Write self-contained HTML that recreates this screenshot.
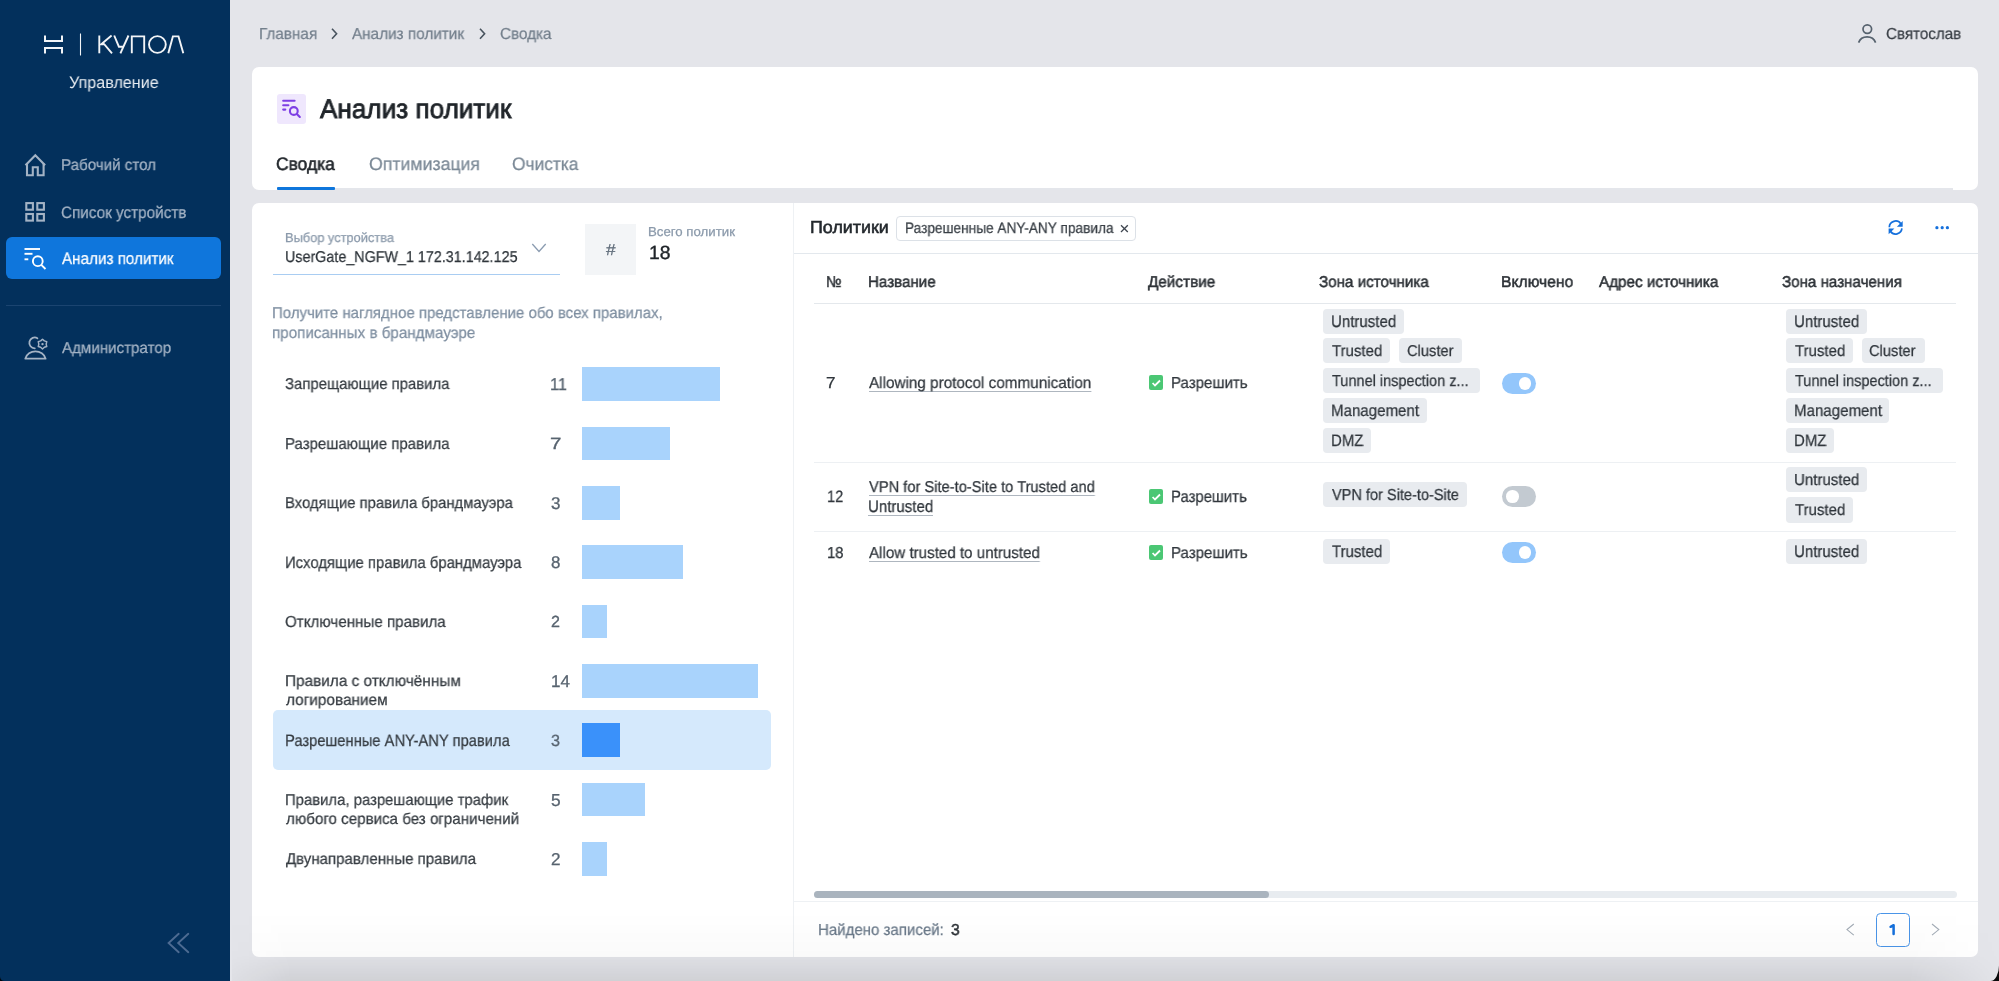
<!DOCTYPE html>
<html><head><meta charset="utf-8"><title>Анализ политик</title>
<style>
html,body{margin:0;padding:0;}
body{width:1999px;height:981px;overflow:hidden;position:relative;background:#E4E5EA;font-family:'Liberation Sans', sans-serif;}
.t{position:absolute;white-space:nowrap;will-change:transform;text-rendering:geometricPrecision;}
.r{position:absolute;}
</style></head><body>
<div class="r" style="left:0px;top:0px;width:230px;height:981px;background:#03305C;"></div>
<svg class="r" style="left:0;top:0" width="230" height="100" viewBox="0 0 230 100">
<g fill="none" stroke="#F2F4F7" stroke-width="2">
<path d="M45 35.5 V41 H62 V35.5"/><path d="M45 53.5 V48 H62 V53.5"/>
</g>
<path d="M80.5 33.5 V55.5" stroke="#F2F4F7" stroke-width="1.1"/>
<g fill="none" stroke="#F2F4F7" stroke-width="1.9">
<path d="M99.3 35.5 V53.3"/><path d="M111.6 35.6 L101.2 44.2 H104.2 L112 53.3"/>
<path d="M114.2 35.5 L118.9 46.7 H123.2"/><path d="M128.5 35.5 L120.4 53.3"/>
<path d="M131.8 53.3 V36.4 H144.2 V53.3"/>
<circle cx="157.4" cy="44.5" r="8.4"/>
<path d="M168.3 53.3 L172.9 36.4 H178.5 L183.3 53.3"/>
</g></svg>
<div class="t" style="left:69.30px;top:75px;font-size:16.6px;line-height:16.6px;font-weight:400;color:#E9EDF2;transform:scaleX(0.9723);transform-origin:0 0;-webkit-text-stroke:0px">Управление</div>
<div class="t" style="left:60.50px;top:158px;font-size:15.7px;line-height:15.7px;font-weight:400;color:#A4B3C5;transform:scaleX(0.9646);transform-origin:0 0;-webkit-text-stroke:0.25px #A4B3C5;">Рабочий стол</div>
<div class="t" style="left:60.50px;top:205px;font-size:16.5px;line-height:16.5px;font-weight:400;color:#A4B3C5;transform:scaleX(0.9254);transform-origin:0 0;-webkit-text-stroke:0.25px #A4B3C5;">Список устройств</div>
<div class="r" style="left:6px;top:237px;width:215px;height:42px;background:#0F76DC;border-radius:6px"></div>
<div class="t" style="left:61.50px;top:251px;font-size:16.6px;line-height:16.6px;font-weight:400;color:#FFFFFF;transform:scaleX(0.9174);transform-origin:0 0;-webkit-text-stroke:0.25px #FFFFFF;">Анализ политик</div>
<div class="r" style="left:6px;top:305px;width:215px;height:1px;background:#1B4470;"></div>
<div class="t" style="left:61.50px;top:341px;font-size:15.7px;line-height:15.7px;font-weight:400;color:#A4B3C5;transform:scaleX(0.9646);transform-origin:0 0;-webkit-text-stroke:0.25px #A4B3C5;">Администратор</div>
<svg class="r" style="left:0;top:140px" width="60" height="240" viewBox="0 140 60 240">
<g fill="none" stroke="#A4B3C5" stroke-width="2.1" stroke-linejoin="miter">
<path d="M25.5 165.3 L35.3 155.2 L45.1 165.3"/>
<path d="M27 163.3 V175.3 H32.8 V167.2 H37.8 V175.3 H43.6 V163.3"/>
<rect x="26.3" y="203.1" width="6.6" height="6.6"/><rect x="37.3" y="203.1" width="6.6" height="6.6"/>
<rect x="26.3" y="214" width="6.6" height="6.6"/><rect x="37.3" y="214" width="6.6" height="6.6"/>
</g>
<g fill="none" stroke="#FFFFFF" stroke-width="1.9">
<path d="M24.5 249 H40"/><path d="M24.5 253.8 H32.5"/><path d="M24.5 259.3 H28.3"/>
<circle cx="37.8" cy="261.2" r="4.9"/><path d="M41.3 264.8 L45.5 269"/>
</g>
<g fill="none" stroke="#A4B3C5" stroke-width="1.8" stroke-linejoin="round" stroke-linecap="round">
<path d="M37.4 338.2 A5.4 5.4 0 1 0 34.8 348.3"/>
<path d="M25.3 358.7 H45.6 C44.5 354 40 351.3 35.45 351.3 C30.9 351.3 26.4 354 25.3 358.7 Z"/>
<path d="M42.50 339.20 L44.35 340.90 L46.74 341.65 L46.20 344.10 L46.74 346.55 L44.35 347.30 L42.50 349.00 L40.65 347.30 L38.26 346.55 L38.80 344.10 L38.26 341.65 L40.65 340.90 Z" stroke-width="1.5"/>
</g>
<circle cx="42.5" cy="344.1" r="1.2" fill="#A4B3C5"/>
</svg>
<svg class="r" style="left:160px;top:925px" width="40" height="40" viewBox="160 925 40 40">
<g fill="none" stroke="#4D6B92" stroke-width="1.9" stroke-linecap="round"><path d="M178.7 933.8 L168.6 943 L178.7 952.2"/><path d="M188.3 933.8 L178.2 943 L188.3 952.2"/></g></svg>
<div class="t" style="left:259.20px;top:27px;font-size:15.9px;line-height:15.9px;font-weight:400;color:#737F8C;transform:scaleX(0.9612);transform-origin:0 0;-webkit-text-stroke:0.25px #737F8C;">Главная</div>
<div class="t" style="left:352.30px;top:27px;font-size:15.9px;line-height:15.9px;font-weight:400;color:#737F8C;transform:scaleX(0.9621);transform-origin:0 0;-webkit-text-stroke:0.25px #737F8C;">Анализ политик</div>
<div class="t" style="left:500.20px;top:27px;font-size:15.9px;line-height:15.9px;font-weight:400;color:#737F8C;transform:scaleX(0.9605);transform-origin:0 0;-webkit-text-stroke:0.25px #737F8C;">Сводка</div>
<svg class="r" style="left:320px;top:20px" width="180" height="30" viewBox="320 20 180 30">
<g fill="none" stroke="#48535E" stroke-width="1.6"><path d="M332 28.8 L336.6 33.8 L332 38.8"/><path d="M480 28.8 L484.6 33.8 L480 38.8"/></g></svg>
<svg class="r" style="left:1850px;top:18px" width="30" height="30" viewBox="1850 18 30 30">
<g fill="none" stroke="#56626E" stroke-width="1.7"><circle cx="1867.3" cy="29.1" r="4.3"/><path d="M1858.6 42.6 A9 8.5 0 0 1 1875.6 42.6"/></g></svg>
<div class="t" style="left:1885.80px;top:27px;font-size:15.9px;line-height:15.9px;font-weight:400;color:#383E45;transform:scaleX(0.9546);transform-origin:0 0;-webkit-text-stroke:0.25px #383E45;">Святослав</div>
<div class="r" style="left:252px;top:67px;width:1726px;height:123px;background:#FFFFFF;border-radius:7px"></div>
<div class="r" style="left:277px;top:94px;width:29.3px;height:29.5px;background:#EFE7FD;border-radius:3px"></div>
<svg class="r" style="left:270px;top:88px" width="50" height="42" viewBox="270 88 50 42">
<g fill="none" stroke="#7E3FE4" stroke-width="2.1" stroke-linecap="round">
<path d="M283.2 100.8 H294.6"/><path d="M283.2 105.2 H288.4"/><path d="M283.2 109.6 H285.3"/>
<circle cx="293.8" cy="111" r="3.9"/><path d="M296.8 114 L299.8 117"/></g></svg>
<div class="t" style="left:319.70px;top:95px;font-size:27.1px;line-height:27.1px;font-weight:400;color:#1F2429;transform:scaleX(0.9638);transform-origin:0 0;-webkit-text-stroke:0.85px #1F2429">Анализ политик</div>
<div class="t" style="left:276.30px;top:155px;font-size:18.0px;line-height:18.0px;font-weight:400;color:#22272C;transform:scaleX(0.9684);transform-origin:0 0;-webkit-text-stroke:0.55px #22272C">Сводка</div>
<div class="t" style="left:368.90px;top:155px;font-size:18.0px;line-height:18.0px;font-weight:400;color:#7B8996;transform:scaleX(0.9838);transform-origin:0 0;-webkit-text-stroke:0.25px #7B8996;">Оптимизация</div>
<div class="t" style="left:511.80px;top:155px;font-size:18.0px;line-height:18.0px;font-weight:400;color:#7B8996;transform:scaleX(0.9618);transform-origin:0 0;-webkit-text-stroke:0.25px #7B8996;">Очистка</div>
<div class="r" style="left:277px;top:188px;width:1676px;height:2px;background:#E4E6EB;"></div>
<div class="r" style="left:277px;top:187px;width:58px;height:3px;background:#0F76DC;border-radius:1px"></div>
<div class="r" style="left:252px;top:202.5px;width:1726px;height:754.5px;background:#FFFFFF;border-radius:7px"></div>
<div class="t" style="left:284.75px;top:231px;font-size:13.0px;line-height:13.0px;font-weight:400;color:#8A99AA;transform:scaleX(0.9864);transform-origin:0 0;-webkit-text-stroke:0.25px #8A99AA;">Выбор устройства</div>
<div class="t" style="left:284.75px;top:250px;font-size:15.7px;line-height:15.7px;font-weight:400;color:#2E343A;transform:scaleX(0.9130);transform-origin:0 0;-webkit-text-stroke:0.25px #2E343A;">UserGate_NGFW_1 172.31.142.125</div>
<div class="r" style="left:272.5px;top:274px;width:287.5px;height:1.2px;background:#A9CDF2;"></div>
<svg class="r" style="left:525px;top:238px" width="30" height="20" viewBox="525 238 30 20">
<path d="M532.3 244 L539 251.5 L545.7 244" fill="none" stroke="#8A9BB0" stroke-width="1.3"/></svg>
<div class="r" style="left:585px;top:223.7px;width:51px;height:51px;background:#F3F5F7;"></div>
<div class="t" style="left:605.75px;top:243px;font-size:15.9px;line-height:15.9px;font-weight:400;color:#5E6B79;transform:scaleX(1.0857);transform-origin:0 0;-webkit-text-stroke:0.25px #5E6B79;">#</div>
<div class="t" style="left:647.75px;top:225px;font-size:13.0px;line-height:13.0px;font-weight:400;color:#8A99AA;transform:scaleX(1.0179);transform-origin:0 0;-webkit-text-stroke:0.25px #8A99AA;">Всего политик</div>
<div class="t" style="left:648.50px;top:244px;font-size:19.1px;line-height:19.1px;font-weight:400;color:#1F2429;transform:scaleX(1.0136);transform-origin:0 0;-webkit-text-stroke:0.4px #1F2429">18</div>
<div class="t" style="left:271.80px;top:306px;font-size:15.7px;line-height:15.7px;font-weight:400;color:#7F8FA1;transform:scaleX(0.9555);transform-origin:0 0;-webkit-text-stroke:0.25px #7F8FA1;">Получите наглядное представление обо всех правилах,</div>
<div class="t" style="left:271.80px;top:326px;font-size:15.9px;line-height:15.9px;font-weight:400;color:#7F8FA1;transform:scaleX(0.9559);transform-origin:0 0;-webkit-text-stroke:0.25px #7F8FA1;">прописанных в брандмауэре</div>
<div class="t" style="left:284.80px;top:377px;font-size:15.7px;line-height:15.7px;font-weight:400;color:#363C42;transform:scaleX(0.9494);transform-origin:0 0;-webkit-text-stroke:0.25px #363C42;">Запрещающие правила</div>
<div class="t" style="left:549.80px;top:376px;font-size:17.1px;line-height:17.1px;font-weight:400;color:#57636F;transform:scaleX(0.9564);transform-origin:0 0;-webkit-text-stroke:0.3px #57636F">11</div>
<div class="r" style="left:582px;top:367.2px;width:138.27px;height:33.6px;background:#A9D3FC;"></div>
<div class="t" style="left:284.80px;top:437px;font-size:15.9px;line-height:15.9px;font-weight:400;color:#363C42;transform:scaleX(0.9451);transform-origin:0 0;-webkit-text-stroke:0.25px #363C42;">Разрешающие правила</div>
<div class="t" style="left:549.80px;top:436px;font-size:16.2px;line-height:16.2px;font-weight:400;color:#57636F;transform:scaleX(1.2768);transform-origin:0 0;-webkit-text-stroke:0.3px #57636F">7</div>
<div class="r" style="left:582px;top:426.575px;width:87.99000000000001px;height:33.6px;background:#A9D3FC;"></div>
<div class="t" style="left:284.80px;top:496px;font-size:15.7px;line-height:15.7px;font-weight:400;color:#363C42;transform:scaleX(0.9467);transform-origin:0 0;-webkit-text-stroke:0.25px #363C42;">Входящие правила брандмауэра</div>
<div class="t" style="left:550.80px;top:495px;font-size:17.0px;line-height:17.0px;font-weight:400;color:#57636F;-webkit-text-stroke:0.3px #57636F">3</div>
<div class="r" style="left:582px;top:485.95px;width:37.71px;height:33.6px;background:#A9D3FC;"></div>
<div class="t" style="left:284.80px;top:555px;font-size:16.5px;line-height:16.5px;font-weight:400;color:#363C42;transform:scaleX(0.9008);transform-origin:0 0;-webkit-text-stroke:0.25px #363C42;">Исходящие правила брандмауэра</div>
<div class="t" style="left:550.80px;top:555px;font-size:16.9px;line-height:16.9px;font-weight:400;color:#57636F;-webkit-text-stroke:0.3px #57636F">8</div>
<div class="r" style="left:582px;top:545.325px;width:100.56px;height:33.6px;background:#A9D3FC;"></div>
<div class="t" style="left:284.80px;top:615px;font-size:15.9px;line-height:15.9px;font-weight:400;color:#363C42;transform:scaleX(0.9530);transform-origin:0 0;-webkit-text-stroke:0.25px #363C42;">Отключенные правила</div>
<div class="t" style="left:550.80px;top:614px;font-size:16.1px;line-height:16.1px;font-weight:400;color:#57636F;-webkit-text-stroke:0.3px #57636F">2</div>
<div class="r" style="left:582px;top:604.7px;width:25.14px;height:33.6px;background:#A9D3FC;"></div>
<div class="t" style="left:284.80px;top:674px;font-size:15.7px;line-height:15.7px;font-weight:400;color:#363C42;transform:scaleX(0.9787);transform-origin:0 0;-webkit-text-stroke:0.25px #363C42;">Правила с отключённым</div>
<div class="t" style="left:285.80px;top:693px;font-size:15.7px;line-height:15.7px;font-weight:400;color:#363C42;transform:scaleX(0.9796);transform-origin:0 0;-webkit-text-stroke:0.25px #363C42;">логированием</div>
<div class="t" style="left:550.80px;top:673px;font-size:17.0px;line-height:17.0px;font-weight:400;color:#57636F;-webkit-text-stroke:0.3px #57636F">14</div>
<div class="r" style="left:582px;top:664.075px;width:175.98000000000002px;height:33.6px;background:#A9D3FC;"></div>
<div class="r" style="left:272.7px;top:710.45px;width:498.3px;height:59.3px;background:#D5E9FC;border-radius:5px"></div>
<div class="t" style="left:284.80px;top:733px;font-size:16.5px;line-height:16.5px;font-weight:400;color:#363C42;transform:scaleX(0.8924);transform-origin:0 0;-webkit-text-stroke:0.25px #363C42;">Разрешенные ANY-ANY правила</div>
<div class="t" style="left:550.80px;top:733px;font-size:16.2px;line-height:16.2px;font-weight:400;color:#57636F;-webkit-text-stroke:0.3px #57636F">3</div>
<div class="r" style="left:582px;top:723.45px;width:37.71px;height:33.6px;background:#3A91FA;"></div>
<div class="t" style="left:284.80px;top:793px;font-size:15.7px;line-height:15.7px;font-weight:400;color:#363C42;transform:scaleX(0.9479);transform-origin:0 0;-webkit-text-stroke:0.25px #363C42;">Правила, разрешающие трафик</div>
<div class="t" style="left:285.80px;top:812px;font-size:15.7px;line-height:15.7px;font-weight:400;color:#363C42;transform:scaleX(0.9651);transform-origin:0 0;-webkit-text-stroke:0.25px #363C42;">любого сервиса без ограничений</div>
<div class="t" style="left:550.80px;top:792px;font-size:17.3px;line-height:17.3px;font-weight:400;color:#57636F;-webkit-text-stroke:0.3px #57636F">5</div>
<div class="r" style="left:582px;top:782.825px;width:62.85px;height:33.6px;background:#A9D3FC;"></div>
<div class="t" style="left:285.80px;top:852px;font-size:15.7px;line-height:15.7px;font-weight:400;color:#363C42;transform:scaleX(0.9586);transform-origin:0 0;-webkit-text-stroke:0.25px #363C42;">Двунаправленные правила</div>
<div class="t" style="left:550.80px;top:851px;font-size:17.1px;line-height:17.1px;font-weight:400;color:#57636F;-webkit-text-stroke:0.3px #57636F">2</div>
<div class="r" style="left:582px;top:842.2px;width:25.14px;height:33.6px;background:#A9D3FC;"></div>
<div class="r" style="left:792.5px;top:202.5px;width:1px;height:754.5px;background:#EEF1F4;"></div>
<div class="t" style="left:809.50px;top:219px;font-size:17.3px;line-height:17.3px;font-weight:400;color:#23282D;transform:scaleX(1.0338);transform-origin:0 0;-webkit-text-stroke:0.55px #23282D">Политики</div>
<div class="r" style="left:896.3px;top:215.5px;width:240.2px;height:25px;background:#FFFFFF;border:1px solid #DCE1E7;border-radius:4px;box-sizing:border-box"></div>
<div class="t" style="left:905.00px;top:221px;font-size:15.1px;line-height:15.1px;font-weight:400;color:#3A4047;transform:scaleX(0.9052);transform-origin:0 0;-webkit-text-stroke:0.25px #3A4047;">Разрешенные ANY-ANY правила</div>
<svg class="r" style="left:1115px;top:220px" width="20" height="20" viewBox="1115 220 20 20">
<g stroke="#3F4650" stroke-width="1.3"><path d="M1121 225.2 L1127.8 232"/><path d="M1127.8 225.2 L1121 232"/></g></svg>
<svg class="r" style="left:1880px;top:212px" width="80" height="30" viewBox="1880 212 80 30">
<g fill="none" stroke="#1570DC" stroke-width="1.7">
<path d="M1889.3 227.2 A6.3 6.3 0 0 1 1900.8 223.8"/><path d="M1901.9 228.4 A6.3 6.3 0 0 1 1890.4 231.2"/></g>
<path d="M1902.7 221 V226.8 H1896.9 Z" fill="#1570DC"/><path d="M1888.6 234.3 V228.5 H1894.4 Z" fill="#1570DC"/>
<g fill="#1570DC"><circle cx="1936.9" cy="227.7" r="1.6"/><circle cx="1942.2" cy="227.7" r="1.6"/><circle cx="1947.4" cy="227.7" r="1.6"/></g>
</svg>
<div class="r" style="left:793.5px;top:253px;width:1184.5px;height:1px;background:#E3E8ED;"></div>
<div class="t" style="left:826.00px;top:275px;font-size:15.7px;line-height:15.7px;font-weight:400;color:#2C3136;transform:scaleX(0.9186);transform-origin:0 0;-webkit-text-stroke:0.5px #2C3136">№</div>
<div class="t" style="left:868.25px;top:275px;font-size:15.7px;line-height:15.7px;font-weight:400;color:#2C3136;transform:scaleX(0.9638);transform-origin:0 0;-webkit-text-stroke:0.5px #2C3136">Название</div>
<div class="t" style="left:1148.25px;top:275px;font-size:15.7px;line-height:15.7px;font-weight:400;color:#2C3136;transform:scaleX(0.9747);transform-origin:0 0;-webkit-text-stroke:0.5px #2C3136">Действие</div>
<div class="t" style="left:1318.90px;top:275px;font-size:15.7px;line-height:15.7px;font-weight:400;color:#2C3136;transform:scaleX(0.9675);transform-origin:0 0;-webkit-text-stroke:0.5px #2C3136">Зона источника</div>
<div class="t" style="left:1501.10px;top:275px;font-size:15.7px;line-height:15.7px;font-weight:400;color:#2C3136;transform:scaleX(0.9972);transform-origin:0 0;-webkit-text-stroke:0.5px #2C3136">Включено</div>
<div class="t" style="left:1599.00px;top:275px;font-size:15.7px;line-height:15.7px;font-weight:400;color:#2C3136;transform:scaleX(0.9724);transform-origin:0 0;-webkit-text-stroke:0.5px #2C3136">Адрес источника</div>
<div class="t" style="left:1781.80px;top:275px;font-size:15.7px;line-height:15.7px;font-weight:400;color:#2C3136;transform:scaleX(0.9650);transform-origin:0 0;-webkit-text-stroke:0.5px #2C3136">Зона назначения</div>
<div class="r" style="left:814px;top:303px;width:1142px;height:1px;background:#E4E8EC;"></div>
<div class="r" style="left:814px;top:462px;width:1142px;height:1px;background:#EDF0F3;"></div>
<div class="r" style="left:814px;top:531px;width:1142px;height:1px;background:#EDF0F3;"></div>
<div class="t" style="left:825.90px;top:376px;font-size:15.9px;line-height:15.9px;font-weight:400;color:#30363C;transform:scaleX(1.0762);transform-origin:0 0;-webkit-text-stroke:0.25px #30363C;">7</div>
<div class="t" style="left:868.90px;top:376px;font-size:15.9px;line-height:15.9px;font-weight:400;color:#30363C;transform:scaleX(0.9609);transform-origin:0 0;-webkit-text-stroke:0.25px #30363C;text-decoration:underline;text-decoration-color:#AEB6BF;text-underline-offset:3px;text-decoration-thickness:1px">Allowing protocol communication</div>
<div class="r" style="left:1148.7px;top:375.2px;width:14.5px;height:14.5px;background:#4BC774;border-radius:2px"></div>
<svg class="r" style="left:1148.7px;top:375.2px" width="15" height="15" viewBox="0 0 15 15"><path d="M3.6 8 L6 10.5 L11 5.5" fill="none" stroke="#fff" stroke-width="1.8"/></svg>
<div class="t" style="left:1171.40px;top:376px;font-size:15.9px;line-height:15.9px;font-weight:400;color:#30363C;transform:scaleX(0.9482);transform-origin:0 0;-webkit-text-stroke:0.25px #30363C;">Разрешить</div>
<div class="r" style="left:1502px;top:372.9px;width:33.7px;height:20.8px;background:#93C6FB;border-radius:11px"></div>
<div class="r" style="left:1518.5px;top:377.0px;width:12.6px;height:12.6px;background:#FFFFFF;border-radius:50%"></div>
<div class="r" style="left:1323.4px;top:308.6px;width:80.9px;height:25.2px;background:#E8EBEF;border-radius:4px"></div>
<div class="t" style="left:1330.90px;top:314px;font-size:16.6px;line-height:16.6px;font-weight:400;color:#30363C;transform:scaleX(0.9072);transform-origin:0 0;-webkit-text-stroke:0.25px #30363C;">Untrusted</div>
<div class="r" style="left:1323.4px;top:338.2px;width:66.5px;height:25.2px;background:#E8EBEF;border-radius:4px"></div>
<div class="t" style="left:1331.90px;top:344px;font-size:15.7px;line-height:15.7px;font-weight:400;color:#30363C;transform:scaleX(0.9539);transform-origin:0 0;-webkit-text-stroke:0.25px #30363C;">Trusted</div>
<div class="r" style="left:1399.0px;top:338.2px;width:62.9px;height:25.2px;background:#E8EBEF;border-radius:4px"></div>
<div class="t" style="left:1406.50px;top:344px;font-size:15.7px;line-height:15.7px;font-weight:400;color:#30363C;transform:scaleX(0.9348);transform-origin:0 0;-webkit-text-stroke:0.25px #30363C;">Cluster</div>
<div class="r" style="left:1323.4px;top:368px;width:157px;height:25.2px;background:#E8EBEF;border-radius:4px"></div>
<div class="t" style="left:1331.90px;top:374px;font-size:15.9px;line-height:15.9px;font-weight:400;color:#30363C;transform:scaleX(0.9129);transform-origin:0 0;-webkit-text-stroke:0.25px #30363C;">Tunnel inspection z...</div>
<div class="r" style="left:1323.4px;top:397.8px;width:103.3px;height:25.2px;background:#E8EBEF;border-radius:4px"></div>
<div class="t" style="left:1330.90px;top:403px;font-size:16.5px;line-height:16.5px;font-weight:400;color:#30363C;transform:scaleX(0.9137);transform-origin:0 0;-webkit-text-stroke:0.25px #30363C;">Management</div>
<div class="r" style="left:1323.4px;top:427.7px;width:47.4px;height:25.2px;background:#E8EBEF;border-radius:4px"></div>
<div class="t" style="left:1330.90px;top:433px;font-size:16.5px;line-height:16.5px;font-weight:400;color:#30363C;transform:scaleX(0.9030);transform-origin:0 0;-webkit-text-stroke:0.25px #30363C;">DMZ</div>
<div class="r" style="left:1786.2px;top:308.6px;width:80.9px;height:25.2px;background:#E8EBEF;border-radius:4px"></div>
<div class="t" style="left:1793.70px;top:314px;font-size:16.6px;line-height:16.6px;font-weight:400;color:#30363C;transform:scaleX(0.9072);transform-origin:0 0;-webkit-text-stroke:0.25px #30363C;">Untrusted</div>
<div class="r" style="left:1786.2px;top:338.2px;width:66.5px;height:25.2px;background:#E8EBEF;border-radius:4px"></div>
<div class="t" style="left:1794.70px;top:344px;font-size:15.7px;line-height:15.7px;font-weight:400;color:#30363C;transform:scaleX(0.9539);transform-origin:0 0;-webkit-text-stroke:0.25px #30363C;">Trusted</div>
<div class="r" style="left:1861.8px;top:338.2px;width:62.9px;height:25.2px;background:#E8EBEF;border-radius:4px"></div>
<div class="t" style="left:1869.30px;top:344px;font-size:15.7px;line-height:15.7px;font-weight:400;color:#30363C;transform:scaleX(0.9348);transform-origin:0 0;-webkit-text-stroke:0.25px #30363C;">Cluster</div>
<div class="r" style="left:1786.2px;top:368px;width:157px;height:25.2px;background:#E8EBEF;border-radius:4px"></div>
<div class="t" style="left:1794.70px;top:374px;font-size:15.9px;line-height:15.9px;font-weight:400;color:#30363C;transform:scaleX(0.9129);transform-origin:0 0;-webkit-text-stroke:0.25px #30363C;">Tunnel inspection z...</div>
<div class="r" style="left:1786.2px;top:397.8px;width:103.3px;height:25.2px;background:#E8EBEF;border-radius:4px"></div>
<div class="t" style="left:1793.70px;top:403px;font-size:16.5px;line-height:16.5px;font-weight:400;color:#30363C;transform:scaleX(0.9137);transform-origin:0 0;-webkit-text-stroke:0.25px #30363C;">Management</div>
<div class="r" style="left:1786.2px;top:427.7px;width:47.4px;height:25.2px;background:#E8EBEF;border-radius:4px"></div>
<div class="t" style="left:1793.70px;top:433px;font-size:16.5px;line-height:16.5px;font-weight:400;color:#30363C;transform:scaleX(0.9030);transform-origin:0 0;-webkit-text-stroke:0.25px #30363C;">DMZ</div>
<div class="t" style="left:826.70px;top:489px;font-size:16.5px;line-height:16.5px;font-weight:400;color:#30363C;transform:scaleX(0.8824);transform-origin:0 0;-webkit-text-stroke:0.25px #30363C;">12</div>
<div class="t" style="left:869.00px;top:480px;font-size:15.7px;line-height:15.7px;font-weight:400;color:#30363C;transform:scaleX(0.9353);transform-origin:0 0;-webkit-text-stroke:0.25px #30363C;text-decoration:underline;text-decoration-color:#AEB6BF;text-underline-offset:3px;text-decoration-thickness:1px">VPN for Site-to-Site to Trusted and</div>
<div class="t" style="left:868.00px;top:499px;font-size:16.6px;line-height:16.6px;font-weight:400;color:#30363C;transform:scaleX(0.9072);transform-origin:0 0;-webkit-text-stroke:0.25px #30363C;text-decoration:underline;text-decoration-color:#AEB6BF;text-underline-offset:3px;text-decoration-thickness:1px">Untrusted</div>
<div class="r" style="left:1148.7px;top:489.2px;width:14.5px;height:14.5px;background:#4BC774;border-radius:2px"></div>
<svg class="r" style="left:1148.7px;top:489.2px" width="15" height="15" viewBox="0 0 15 15"><path d="M3.6 8 L6 10.5 L11 5.5" fill="none" stroke="#fff" stroke-width="1.8"/></svg>
<div class="t" style="left:1171.40px;top:489px;font-size:16.5px;line-height:16.5px;font-weight:400;color:#30363C;transform:scaleX(0.9025);transform-origin:0 0;-webkit-text-stroke:0.25px #30363C;">Разрешить</div>
<div class="r" style="left:1323.4px;top:482px;width:143.5px;height:25.2px;background:#E8EBEF;border-radius:4px"></div>
<div class="t" style="left:1331.90px;top:488px;font-size:15.9px;line-height:15.9px;font-weight:400;color:#30363C;transform:scaleX(0.9152);transform-origin:0 0;-webkit-text-stroke:0.25px #30363C;">VPN for Site-to-Site</div>
<div class="r" style="left:1502px;top:486.2px;width:33.7px;height:20.8px;background:#C3CAD1;border-radius:11px"></div>
<div class="r" style="left:1506px;top:490.3px;width:12.6px;height:12.6px;background:#FFFFFF;border-radius:50%"></div>
<div class="r" style="left:1786.2px;top:467px;width:80.9px;height:25.2px;background:#E8EBEF;border-radius:4px"></div>
<div class="t" style="left:1793.70px;top:473px;font-size:15.9px;line-height:15.9px;font-weight:400;color:#30363C;transform:scaleX(0.9478);transform-origin:0 0;-webkit-text-stroke:0.25px #30363C;">Untrusted</div>
<div class="r" style="left:1786.2px;top:497.4px;width:66.5px;height:25.2px;background:#E8EBEF;border-radius:4px"></div>
<div class="t" style="left:1794.70px;top:503px;font-size:15.7px;line-height:15.7px;font-weight:400;color:#30363C;transform:scaleX(0.9539);transform-origin:0 0;-webkit-text-stroke:0.25px #30363C;">Trusted</div>
<div class="t" style="left:826.70px;top:546px;font-size:15.9px;line-height:15.9px;font-weight:400;color:#30363C;transform:scaleX(0.9375);transform-origin:0 0;-webkit-text-stroke:0.25px #30363C;">18</div>
<div class="t" style="left:869.00px;top:546px;font-size:15.9px;line-height:15.9px;font-weight:400;color:#30363C;transform:scaleX(0.9528);transform-origin:0 0;-webkit-text-stroke:0.25px #30363C;text-decoration:underline;text-decoration-color:#AEB6BF;text-underline-offset:3px;text-decoration-thickness:1px">Allow trusted to untrusted</div>
<div class="r" style="left:1148.7px;top:545.2px;width:14.5px;height:14.5px;background:#4BC774;border-radius:2px"></div>
<svg class="r" style="left:1148.7px;top:545.2px" width="15" height="15" viewBox="0 0 15 15"><path d="M3.6 8 L6 10.5 L11 5.5" fill="none" stroke="#fff" stroke-width="1.8"/></svg>
<div class="t" style="left:1171.40px;top:546px;font-size:15.9px;line-height:15.9px;font-weight:400;color:#30363C;transform:scaleX(0.9482);transform-origin:0 0;-webkit-text-stroke:0.25px #30363C;">Разрешить</div>
<div class="r" style="left:1323.4px;top:538.5px;width:66.5px;height:25.2px;background:#E8EBEF;border-radius:4px"></div>
<div class="t" style="left:1331.90px;top:544px;font-size:16.6px;line-height:16.6px;font-weight:400;color:#30363C;transform:scaleX(0.9019);transform-origin:0 0;-webkit-text-stroke:0.25px #30363C;">Trusted</div>
<div class="r" style="left:1502px;top:542.3px;width:33.7px;height:20.8px;background:#93C6FB;border-radius:11px"></div>
<div class="r" style="left:1518.5px;top:546.4px;width:12.6px;height:12.6px;background:#FFFFFF;border-radius:50%"></div>
<div class="r" style="left:1786.2px;top:538.5px;width:80.9px;height:25.2px;background:#E8EBEF;border-radius:4px"></div>
<div class="t" style="left:1793.70px;top:544px;font-size:16.6px;line-height:16.6px;font-weight:400;color:#30363C;transform:scaleX(0.9072);transform-origin:0 0;-webkit-text-stroke:0.25px #30363C;">Untrusted</div>
<div class="r" style="left:814px;top:891.3px;width:1142.5px;height:6.3px;background:#E8ECF0;border-radius:4px"></div>
<div class="r" style="left:814px;top:891.3px;width:455px;height:6.3px;background:#AAB4BE;border-radius:4px"></div>
<div class="r" style="left:793.5px;top:901.3px;width:1184.5px;height:1px;background:#EEF1F4;"></div>
<div class="t" style="left:817.80px;top:923px;font-size:15.9px;line-height:15.9px;font-weight:400;color:#6C7B8B;transform:scaleX(0.9458);transform-origin:0 0;-webkit-text-stroke:0.25px #6C7B8B;">Найдено записей:</div>
<div class="t" style="left:951.30px;top:923px;font-size:15.9px;line-height:15.9px;font-weight:400;color:#2B3035;transform:scaleX(0.9799);transform-origin:0 0;-webkit-text-stroke:0.5px #2B3035">3</div>
<div class="r" style="left:1876.1px;top:912.7px;width:33.7px;height:33.9px;background:#FFFFFF;border:1.2px solid #4A95E8;border-radius:4.5px;box-sizing:border-box"></div>
<svg class="r" style="left:1870px;top:910px" width="45" height="40" viewBox="1870 910 45 40">
<path d="M1890.6 926.8 L1893.6 925.2 V933.9" fill="none" stroke="#1570DC" stroke-width="2.5" stroke-linecap="round" stroke-linejoin="round"/></svg>
<svg class="r" style="left:1840px;top:918px" width="110" height="24" viewBox="1840 918 110 24">
<g fill="none" stroke="#A3ACB6" stroke-width="1.1"><path d="M1853.8 924 L1847 929.6 L1853.8 935.2"/><path d="M1932 924 L1938.8 929.6 L1932 935.2"/></g></svg>
<div class="r" style="left:232px;top:912px;width:1767px;height:69px;background:linear-gradient(to bottom, rgba(0,0,0,0) 0%, rgba(0,0,0,0.02) 62%, rgba(0,0,0,0.085) 100%);pointer-events:none;-webkit-mask-image:linear-gradient(to right, rgba(0,0,0,0.3), #000 60px, #000 calc(100% - 90px), rgba(0,0,0,0.05));mask-image:linear-gradient(to right, rgba(0,0,0,0.3), #000 60px, #000 calc(100% - 90px), rgba(0,0,0,0.05))"></div>
<svg class="r" style="left:0;top:960px" width="20" height="21" viewBox="0 960 20 21"><path d="M0 976.5 A4.5 4.5 0 0 0 4.5 981 H0 Z" fill="#000" opacity="0.85"/></svg>
<svg class="r" style="left:1980px;top:955px" width="19" height="26" viewBox="1980 955 19 26"><path d="M1999 965.5 A8.5 15.5 0 0 1 1990.5 981 H1999 Z" fill="#0A0A0A"/></svg>
</body></html>
